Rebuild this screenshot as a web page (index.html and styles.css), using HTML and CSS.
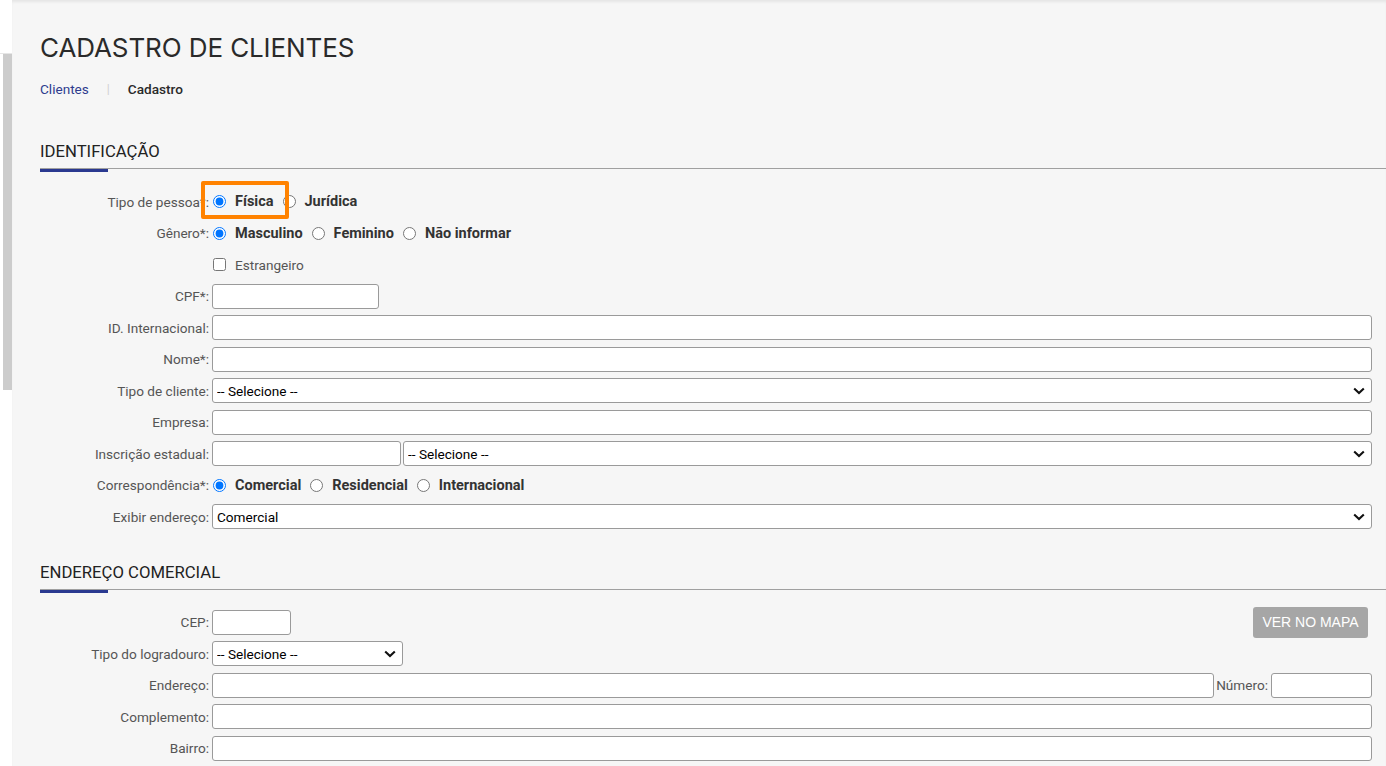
FILE: index.html
```html
<!DOCTYPE html>
<html lang="pt-BR">
<head>
<meta charset="utf-8">
<title>Cadastro de Clientes</title>
<link rel="stylesheet" href="styles.css">
</head>
<body>
<div class="app">
  <aside class="rail">
    <div class="rail-top"></div>
    <div class="rail-thumb"></div>
  </aside>
  <main class="main">
    <h1 class="page-title">CADASTRO DE CLIENTES</h1>
    <nav class="breadcrumb">
      <a class="crumb-link" href="#">Clientes</a>
      <span class="crumb-sep">|</span>
      <span class="crumb-current">Cadastro</span>
    </nav>

    <section class="section">
      <h2 class="section-title">IDENTIFICAÇÃO</h2>
      <div class="form">
        <div class="row row-mark">
          <span class="lbl">Tipo de pessoa*:</span>
          <div class="ctrl radios">
            <label class="opt"><input type="radio" name="tp" checked> Física</label>
            <label class="opt"><input type="radio" name="tp"> Jurídica</label>
          </div>
          <div class="highlight"></div>
        </div>
        <div class="row">
          <span class="lbl">Gênero*:</span>
          <div class="ctrl radios">
            <label class="opt"><input type="radio" name="gen" checked> Masculino</label>
            <label class="opt"><input type="radio" name="gen"> Feminino</label>
            <label class="opt"><input type="radio" name="gen"> Não informar</label>
          </div>
        </div>
        <div class="row">
          <span class="lbl"></span>
          <div class="ctrl">
            <label class="chk"><input type="checkbox"> Estrangeiro</label>
          </div>
        </div>
        <div class="row">
          <span class="lbl">CPF*:</span>
          <div class="ctrl"><input class="field w-cpf" type="text"></div>
        </div>
        <div class="row">
          <span class="lbl">ID. Internacional:</span>
          <div class="ctrl"><input class="field grow" type="text"></div>
        </div>
        <div class="row">
          <span class="lbl">Nome*:</span>
          <div class="ctrl"><input class="field grow" type="text"></div>
        </div>
        <div class="row">
          <span class="lbl">Tipo de cliente:</span>
          <div class="ctrl"><select class="field sel grow"><option>-- Selecione --</option></select></div>
        </div>
        <div class="row">
          <span class="lbl">Empresa:</span>
          <div class="ctrl"><input class="field grow" type="text"></div>
        </div>
        <div class="row">
          <span class="lbl">Inscrição estadual:</span>
          <div class="ctrl pair">
            <input class="field w-ie" type="text">
            <select class="field sel grow"><option>-- Selecione --</option></select>
          </div>
        </div>
        <div class="row">
          <span class="lbl">Correspondência*:</span>
          <div class="ctrl radios">
            <label class="opt"><input type="radio" name="cor" checked> Comercial</label>
            <label class="opt"><input type="radio" name="cor"> Residencial</label>
            <label class="opt"><input type="radio" name="cor"> Internacional</label>
          </div>
        </div>
        <div class="row">
          <span class="lbl">Exibir endereço:</span>
          <div class="ctrl"><select class="field sel grow"><option>Comercial</option></select></div>
        </div>
      </div>
    </section>

    <section class="section">
      <h2 class="section-title">ENDEREÇO COMERCIAL</h2>
      <div class="form">
        <div class="row">
          <span class="lbl">CEP:</span>
          <div class="ctrl">
            <input class="field w-cep" type="text">
            <button class="btn-map" type="button">VER NO MAPA</button>
          </div>
        </div>
        <div class="row">
          <span class="lbl">Tipo do logradouro:</span>
          <div class="ctrl"><select class="field sel w-log"><option>-- Selecione --</option></select></div>
        </div>
        <div class="row">
          <span class="lbl">Endereço:</span>
          <div class="ctrl">
            <input class="field grow" type="text">
            <span class="inline-lbl">Número:</span>
            <input class="field w-num" type="text">
          </div>
        </div>
        <div class="row">
          <span class="lbl">Complemento:</span>
          <div class="ctrl"><input class="field grow" type="text"></div>
        </div>
        <div class="row">
          <span class="lbl">Bairro:</span>
          <div class="ctrl"><input class="field grow" type="text"></div>
        </div>
      </div>
    </section>
  </main>
</div>
</body>
</html>
```

FILE: styles.css
```css
* { box-sizing: border-box; }

html, body {
  margin: 0;
  padding: 0;
  height: 100%;
  overflow: hidden;
  background: #ffffff;
  font-family: Roboto, "Liberation Sans", Arial, sans-serif;
}

.app {
  display: flex;
  height: 766px;
}

.rail {
  width: 12px;
  flex: none;
  background: #ffffff;
  display: flex;
  flex-direction: column;
}

.rail-top {
  height: 54px;
  border-bottom: 1px solid #e6e6e6;
}

.rail-thumb {
  margin-left: 3px;
  height: 336px;
  background: #cccccc;
}

.main {
  flex: 1;
  background: #f6f6f6;
  padding: 31px 14px 0 28px;
  box-shadow: inset 0 3px 3px -1px rgba(0, 0, 0, 0.07);
}

.page-title {
  margin: 0;
  font-family: Inter, Roboto, sans-serif;
  font-weight: 400;
  font-size: 26px;
  line-height: 34px;
  color: #2a2a2a;
  letter-spacing: -0.1px;
}

.breadcrumb {
  display: flex;
  align-items: center;
  margin-top: 16px;
  font-size: 13.6px;
  line-height: 16px;
}

.crumb-link {
  color: #2e3c8e;
  text-decoration: none;
}

.crumb-sep {
  color: #d0d0d0;
  margin: 0 18px 0 18px;
  font-size: 12px;
}

.crumb-current {
  color: #2a2a2a;
  font-weight: 500;
}

.section {
  margin-top: 45px;
}

.section + .section {
  margin-top: 30px;
}

.section-title {
  position: relative;
  margin: 0 -14px 0 0;
  padding-bottom: 6px;
  font-size: 16.7px;
  line-height: 20px;
  font-weight: 400;
  color: #222222;
  border-bottom: 1px solid #a0a0a0;
}

.section-title::after {
  content: "";
  position: absolute;
  left: 0;
  bottom: -4px;
  width: 68px;
  height: 3px;
  background: #2a3990;
}

.form {
  padding-top: 17px;
}

.row {
  display: flex;
  align-items: center;
  height: 31.5px;
}

.row-mark {
  position: relative;
}

.highlight {
  position: absolute;
  left: 161px;
  top: -5px;
  width: 88px;
  height: 38px;
  border: 4px solid #ff8200;
  border-radius: 2px;
  pointer-events: none;
}

.lbl {
  width: 169px;
  flex: none;
  text-align: right;
  font-size: 13.6px;
  color: #555555;
  margin-right: 3px;
  white-space: nowrap;
}

.ctrl {
  flex: 1;
  display: flex;
  align-items: center;
  min-width: 0;
}

.radios {
  gap: 8px;
}

.opt {
  display: inline-flex;
  align-items: center;
  gap: 9px;
  font-size: 14.5px;
  font-weight: 700;
  color: #333333;
}

.opt input {
  margin: 0 0 0 1px;
  width: 13px;
  height: 13px;
}

.chk {
  display: inline-flex;
  align-items: center;
  gap: 9px;
  font-size: 13.6px;
  color: #555555;
}

.chk input {
  margin: 0 0 0 1px;
  width: 13px;
  height: 13px;
}

.field {
  height: 25px;
  border: 1px solid #9a9a9a;
  border-radius: 3px;
  background: #ffffff;
  font-family: Roboto, "Liberation Sans", Arial, sans-serif;
  font-size: 13.6px;
  color: #000000;
  padding: 0 4px;
  margin: 0;
}

.sel {
  -webkit-appearance: none;
  appearance: none;
  padding: 0 24px 0 4px;
  background-color: #ffffff;
  background-image: url("data:image/svg+xml,%3Csvg xmlns='http://www.w3.org/2000/svg' width='12' height='8' viewBox='0 0 12 8'%3E%3Cpath d='M1.2 1.4 L6 6 L10.8 1.4' fill='none' stroke='%23111' stroke-width='2.1'/%3E%3C/svg%3E");
  background-repeat: no-repeat;
  background-position: right 6px center;
  background-size: 12px 8px;
}

.grow { flex: 1; min-width: 0; }
.w-cpf { width: 167px; }
.w-ie { width: 189px; margin-right: 2px; }
.w-cep { width: 79px; }
.w-log { width: 191px; }
.w-num { width: 101px; }

.inline-lbl {
  font-size: 13.6px;
  color: #555555;
  margin: 0 3px 0 2px;
}

.btn-map {
  margin-left: auto;
  margin-right: 4px;
  height: 31px;
  width: 115px;
  border: none;
  border-radius: 3px;
  background: #a6a6a6;
  color: #ffffff;
  font-family: "Liberation Sans", Arial, sans-serif;
  font-size: 14px;
  padding: 0;
}
```
